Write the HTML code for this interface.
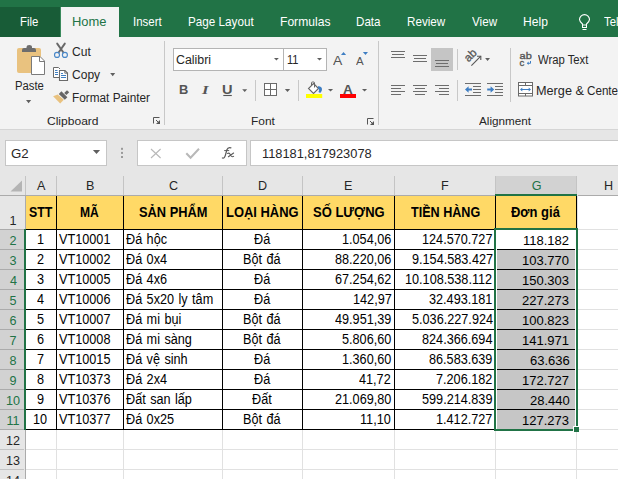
<!DOCTYPE html>
<html><head><meta charset="utf-8"><style>
html,body{margin:0;padding:0;}
body{width:618px;height:479px;overflow:hidden;position:relative;background:#e6e6e6;font-family:"Liberation Sans",sans-serif;}
div{position:absolute;}
.t{white-space:nowrap;line-height:1;transform-origin:0 0;}
</style></head><body>
<div style="left:0px;top:0px;width:618px;height:37px;background:#217346;"></div>
<div style="left:0px;top:7px;width:60px;height:30px;background:#185c37;"></div>
<div style="left:60px;top:7px;width:1px;height:30px;background:#3a8a5c;"></div>
<div style="left:61px;top:7px;width:58px;height:30px;background:#f3f3f3;"></div>
<div class="t" style="left:19.89px;top:16px;font-size:12.6px;color:#fff;transform:scaleX(0.9053);">File</div>
<div class="t" style="left:72.17px;top:16px;font-size:12.6px;color:#217346;transform:scaleX(1.0250);">Home</div>
<div class="t" style="left:132.89px;top:16px;font-size:12.6px;color:#fff;transform:scaleX(0.9097);">Insert</div>
<div class="t" style="left:188.07px;top:16px;font-size:12.6px;color:#fff;transform:scaleX(0.9286);">Page Layout</div>
<div class="t" style="left:280.04px;top:16px;font-size:12.6px;color:#fff;transform:scaleX(0.9608);">Formulas</div>
<div class="t" style="left:356.08px;top:16px;font-size:12.6px;color:#fff;transform:scaleX(0.9231);">Data</div>
<div class="t" style="left:407.07px;top:16px;font-size:12.6px;color:#fff;transform:scaleX(0.9250);">Review</div>
<div class="t" style="left:472.00px;top:16px;font-size:12.6px;color:#fff;transform:scaleX(0.9259);">View</div>
<div class="t" style="left:523.04px;top:16px;font-size:12.6px;color:#fff;transform:scaleX(0.9600);">Help</div>
<div class="t" style="left:604.00px;top:16px;font-size:12.6px;color:#fff;transform:scaleX(0.9000);">Tel</div>
<div style="left:0px;top:37px;width:618px;height:92px;background:#f3f3f3;"></div>
<div style="left:0px;top:129px;width:618px;height:1px;background:#d5d5d5;"></div>
<div style="left:164px;top:41px;width:1px;height:84px;background:#c8c8c8;"></div>
<div style="left:378px;top:41px;width:1px;height:84px;background:#c8c8c8;"></div>
<div style="left:255px;top:80px;width:1px;height:21px;background:#c8c8c8;"></div>
<div style="left:298px;top:80px;width:1px;height:21px;background:#c8c8c8;"></div>
<div style="left:457px;top:49px;width:1px;height:21px;background:#c8c8c8;"></div>
<div style="left:457px;top:80px;width:1px;height:21px;background:#c8c8c8;"></div>
<div style="left:510px;top:48px;width:1px;height:54px;background:#c8c8c8;"></div>
<div class="t" style="left:14.56px;top:80px;font-size:12.0px;color:#262626;transform:scaleX(0.9414);">Paste</div>
<div class="t" style="left:71.59px;top:46px;font-size:12.0px;color:#262626;transform:scaleX(1.0056);">Cut</div>
<div class="t" style="left:71.60px;top:69px;font-size:12.0px;color:#262626;transform:scaleX(1.0037);">Copy</div>
<div class="t" style="left:72.12px;top:92px;font-size:12.0px;color:#262626;transform:scaleX(0.9833);">Format Painter</div>
<div class="t" style="left:47.38px;top:116px;font-size:11.8px;color:#262626;transform:scaleX(1.0204);">Clipboard</div>
<div class="t" style="left:250.79px;top:116px;font-size:11.8px;color:#262626;transform:scaleX(1.0130);">Font</div>
<div class="t" style="left:479.10px;top:116px;font-size:11.8px;color:#262626;transform:scaleX(0.9925);">Alignment</div>
<div class="t" style="left:537.50px;top:54px;font-size:12.0px;color:#262626;transform:scaleX(0.9407);">Wrap Text</div>
<div class="t" style="left:536.44px;top:85px;font-size:12.0px;color:#262626;transform:scaleX(1.0568);">Merge &amp;</div>
<div class="t" style="left:586.73px;top:85px;font-size:12.0px;color:#262626;transform:scaleX(0.9700);">Center</div>
<div style="left:173px;top:48px;width:111px;height:23px;background:#fff;box-sizing:border-box;border:1px solid #b4b4b4;"></div>
<div style="left:283px;top:48px;width:44px;height:23px;background:#fff;box-sizing:border-box;border:1px solid #b4b4b4;"></div>
<div class="t" style="left:175.67px;top:54px;font-size:12.0px;color:#262626;transform:scaleX(1.0312);">Calibri</div>
<div class="t" style="left:286.98px;top:54px;font-size:12.0px;color:#262626;transform:scaleX(0.9182);">11</div>
<div class="t" style="left:178.53px;top:84px;font-size:12.0px;color:#555;font-weight:700;transform:scaleX(1.0714);">B</div>
<div class="t" style="left:222.09px;top:84px;font-size:12.0px;color:#555;font-weight:700;transform:scaleX(1.2143);">U</div>
<div class="t" style="left:202.00px;top:84px;font-size:12.5px;color:#555;font-weight:700;font-family:&quot;Liberation Serif&quot;;font-style:italic;transform:scaleX(1.3400);">I</div>
<div class="t" style="left:333.30px;top:54px;font-size:13.5px;color:#555;transform:scaleX(1.0333);">A</div>
<div class="t" style="left:356.10px;top:56px;font-size:11.0px;color:#555;transform:scaleX(1.0429);">A</div>
<div class="t" style="left:343.30px;top:84px;font-size:12.5px;color:#555;font-weight:700;transform:scaleX(1.0778);">A</div>
<div style="left:0px;top:130px;width:618px;height:46px;background:#e6e6e6;"></div>
<div style="left:5px;top:140px;width:102px;height:26px;background:#fff;box-sizing:border-box;border:1px solid #c6c6c6;"></div>
<div class="t" style="left:11.15px;top:148px;font-size:12.6px;color:#262626;transform:scaleX(1.0533);">G2</div>
<div style="left:137px;top:140px;width:110px;height:26px;background:#fff;box-sizing:border-box;border:1px solid #c6c6c6;"></div>
<div style="left:250px;top:140px;width:373px;height:26px;background:#fff;box-sizing:border-box;border:1px solid #c6c6c6;"></div>
<div class="t" style="left:261.78px;top:148px;font-size:12.6px;color:#262626;transform:scaleX(1.0189);">118181,817923078</div>
<div style="left:0px;top:176px;width:618px;height:19px;background:#e6e6e6;"></div>
<div style="left:0px;top:195px;width:25px;height:284px;background:#e6e6e6;"></div>
<div style="left:26px;top:196px;width:592px;height:283px;background:#fff;"></div>
<div style="left:26px;top:196px;width:550px;height:33px;background:#ffd966;"></div>
<div style="left:496px;top:176px;width:80px;height:18px;background:#d2d2d2;"></div>
<div style="left:25px;top:176px;width:1px;height:19px;background:#c4c4c4;"></div>
<div style="left:56px;top:176px;width:1px;height:19px;background:#c4c4c4;"></div>
<div style="left:123px;top:176px;width:1px;height:19px;background:#c4c4c4;"></div>
<div style="left:222px;top:176px;width:1px;height:19px;background:#c4c4c4;"></div>
<div style="left:302px;top:176px;width:1px;height:19px;background:#c4c4c4;"></div>
<div style="left:394px;top:176px;width:1px;height:19px;background:#c4c4c4;"></div>
<div style="left:495px;top:176px;width:1px;height:19px;background:#c4c4c4;"></div>
<div style="left:576px;top:176px;width:1px;height:19px;background:#c4c4c4;"></div>
<div style="left:0px;top:195px;width:618px;height:1px;background:#ababab;"></div>
<div style="left:25px;top:195px;width:1px;height:284px;background:#ababab;"></div>
<div style="left:0px;top:230px;width:24px;height:199px;background:#d2d2d2;"></div>
<div style="left:24px;top:229px;width:2px;height:201px;background:#217346;"></div>
<div style="left:0px;top:229px;width:24px;height:1px;background:#ababab;"></div>
<div style="left:0px;top:249px;width:24px;height:1px;background:#ababab;"></div>
<div style="left:0px;top:269px;width:24px;height:1px;background:#ababab;"></div>
<div style="left:0px;top:289px;width:24px;height:1px;background:#ababab;"></div>
<div style="left:0px;top:309px;width:24px;height:1px;background:#ababab;"></div>
<div style="left:0px;top:329px;width:24px;height:1px;background:#ababab;"></div>
<div style="left:0px;top:349px;width:24px;height:1px;background:#ababab;"></div>
<div style="left:0px;top:369px;width:24px;height:1px;background:#ababab;"></div>
<div style="left:0px;top:389px;width:24px;height:1px;background:#ababab;"></div>
<div style="left:0px;top:409px;width:24px;height:1px;background:#ababab;"></div>
<div style="left:0px;top:429px;width:24px;height:1px;background:#ababab;"></div>
<div style="left:0px;top:449px;width:24px;height:1px;background:#c4c4c4;"></div>
<div style="left:0px;top:469px;width:24px;height:1px;background:#c4c4c4;"></div>
<div style="left:0px;top:489px;width:24px;height:1px;background:#c4c4c4;"></div>
<div style="left:26px;top:429px;width:592px;height:1px;background:#e1e1e1;"></div>
<div style="left:26px;top:449px;width:592px;height:1px;background:#e1e1e1;"></div>
<div style="left:26px;top:469px;width:592px;height:1px;background:#e1e1e1;"></div>
<div style="left:26px;top:489px;width:592px;height:1px;background:#e1e1e1;"></div>
<div style="left:577px;top:229px;width:41px;height:1px;background:#e1e1e1;"></div>
<div style="left:577px;top:249px;width:41px;height:1px;background:#e1e1e1;"></div>
<div style="left:577px;top:269px;width:41px;height:1px;background:#e1e1e1;"></div>
<div style="left:577px;top:289px;width:41px;height:1px;background:#e1e1e1;"></div>
<div style="left:577px;top:309px;width:41px;height:1px;background:#e1e1e1;"></div>
<div style="left:577px;top:329px;width:41px;height:1px;background:#e1e1e1;"></div>
<div style="left:577px;top:349px;width:41px;height:1px;background:#e1e1e1;"></div>
<div style="left:577px;top:369px;width:41px;height:1px;background:#e1e1e1;"></div>
<div style="left:577px;top:389px;width:41px;height:1px;background:#e1e1e1;"></div>
<div style="left:577px;top:409px;width:41px;height:1px;background:#e1e1e1;"></div>
<div style="left:577px;top:429px;width:41px;height:1px;background:#e1e1e1;"></div>
<div style="left:577px;top:449px;width:41px;height:1px;background:#e1e1e1;"></div>
<div style="left:577px;top:469px;width:41px;height:1px;background:#e1e1e1;"></div>
<div style="left:577px;top:489px;width:41px;height:1px;background:#e1e1e1;"></div>
<div style="left:56px;top:430px;width:1px;height:49px;background:#e1e1e1;"></div>
<div style="left:123px;top:430px;width:1px;height:49px;background:#e1e1e1;"></div>
<div style="left:222px;top:430px;width:1px;height:49px;background:#e1e1e1;"></div>
<div style="left:302px;top:430px;width:1px;height:49px;background:#e1e1e1;"></div>
<div style="left:394px;top:430px;width:1px;height:49px;background:#e1e1e1;"></div>
<div style="left:495px;top:430px;width:1px;height:49px;background:#e1e1e1;"></div>
<div style="left:576px;top:430px;width:1px;height:49px;background:#e1e1e1;"></div>
<div style="left:577px;top:195px;width:1px;height:35px;background:#e1e1e1;"></div>
<div style="left:495px;top:194px;width:82px;height:2px;background:#217346;"></div>
<div style="left:497px;top:250px;width:78px;height:179px;background:#c6c6c6;"></div>
<div style="left:26px;top:229px;width:468px;height:1px;background:#000;"></div>
<div style="left:26px;top:249px;width:468px;height:1px;background:#000;"></div>
<div style="left:26px;top:269px;width:468px;height:1px;background:#000;"></div>
<div style="left:26px;top:289px;width:468px;height:1px;background:#000;"></div>
<div style="left:26px;top:309px;width:468px;height:1px;background:#000;"></div>
<div style="left:26px;top:329px;width:468px;height:1px;background:#000;"></div>
<div style="left:26px;top:349px;width:468px;height:1px;background:#000;"></div>
<div style="left:26px;top:369px;width:468px;height:1px;background:#000;"></div>
<div style="left:26px;top:389px;width:468px;height:1px;background:#000;"></div>
<div style="left:26px;top:409px;width:468px;height:1px;background:#000;"></div>
<div style="left:26px;top:429px;width:468px;height:1px;background:#000;"></div>
<div style="left:497px;top:249px;width:78px;height:1px;background:#000;"></div>
<div style="left:497px;top:269px;width:78px;height:1px;background:#000;"></div>
<div style="left:497px;top:289px;width:78px;height:1px;background:#000;"></div>
<div style="left:497px;top:309px;width:78px;height:1px;background:#000;"></div>
<div style="left:497px;top:329px;width:78px;height:1px;background:#000;"></div>
<div style="left:497px;top:349px;width:78px;height:1px;background:#000;"></div>
<div style="left:497px;top:369px;width:78px;height:1px;background:#000;"></div>
<div style="left:497px;top:389px;width:78px;height:1px;background:#000;"></div>
<div style="left:497px;top:409px;width:78px;height:1px;background:#000;"></div>
<div style="left:56px;top:196px;width:1px;height:234px;background:#000;"></div>
<div style="left:123px;top:196px;width:1px;height:234px;background:#000;"></div>
<div style="left:222px;top:196px;width:1px;height:234px;background:#000;"></div>
<div style="left:302px;top:196px;width:1px;height:234px;background:#000;"></div>
<div style="left:394px;top:196px;width:1px;height:234px;background:#000;"></div>
<div style="left:495px;top:196px;width:1px;height:234px;background:#000;"></div>
<div style="left:576px;top:196px;width:1px;height:234px;background:#000;"></div>
<div style="left:494px;top:228px;width:84px;height:2px;background:#217346;"></div>
<div style="left:494px;top:429px;width:84px;height:2px;background:#217346;"></div>
<div style="left:494px;top:228px;width:2px;height:203px;background:#217346;"></div>
<div style="left:576px;top:228px;width:2px;height:203px;background:#217346;"></div>
<div style="left:573px;top:426px;width:7px;height:7px;background:#fff;"></div>
<div style="left:574px;top:427px;width:5px;height:5px;background:#217346;"></div>
<div style="left:579px;top:429px;width:39px;height:1px;background:#e1e1e1;"></div>
<div style="left:576px;top:432px;width:1px;height:47px;background:#e1e1e1;"></div>
<div class="t" style="left:37.00px;top:180px;font-size:12.6px;color:#262626;">A</div>
<div class="t" style="left:86.00px;top:180px;font-size:12.6px;color:#262626;">B</div>
<div class="t" style="left:169.00px;top:180px;font-size:12.6px;color:#262626;">C</div>
<div class="t" style="left:257.90px;top:180px;font-size:12.6px;color:#262626;">D</div>
<div class="t" style="left:344.10px;top:180px;font-size:12.6px;color:#262626;">E</div>
<div class="t" style="left:440.90px;top:180px;font-size:12.6px;color:#262626;">F</div>
<div class="t" style="left:531.80px;top:180px;font-size:12.6px;color:#217346;">G</div>
<div class="t" style="left:604.10px;top:180px;font-size:12.6px;color:#262626;">H</div>
<div class="t" style="left:9.50px;top:215px;font-size:12.6px;color:#262626;">1</div>
<div class="t" style="left:9.50px;top:235px;font-size:12.6px;color:#217346;">2</div>
<div class="t" style="left:9.50px;top:255px;font-size:12.6px;color:#217346;">3</div>
<div class="t" style="left:10.00px;top:275px;font-size:12.6px;color:#217346;">4</div>
<div class="t" style="left:9.50px;top:295px;font-size:12.6px;color:#217346;">5</div>
<div class="t" style="left:9.50px;top:315px;font-size:12.6px;color:#217346;">6</div>
<div class="t" style="left:9.50px;top:335px;font-size:12.6px;color:#217346;">7</div>
<div class="t" style="left:9.50px;top:355px;font-size:12.6px;color:#217346;">8</div>
<div class="t" style="left:9.50px;top:375px;font-size:12.6px;color:#217346;">9</div>
<div class="t" style="left:6.00px;top:395px;font-size:12.6px;color:#217346;">10</div>
<div class="t" style="left:6.50px;top:415px;font-size:12.6px;color:#217346;">11</div>
<div class="t" style="left:6.00px;top:435px;font-size:12.6px;color:#262626;">12</div>
<div class="t" style="left:6.00px;top:455px;font-size:12.6px;color:#262626;">13</div>
<div class="t" style="left:6.00px;top:475px;font-size:12.6px;color:#262626;">14</div>
<div class="t" style="left:28.72px;top:205px;font-size:14px;color:#000;font-weight:700;transform:scaleX(0.8808);">STT</div>
<div class="t" style="left:80.14px;top:205px;font-size:14px;color:#000;font-weight:700;transform:scaleX(0.8619);">MÃ</div>
<div class="t" style="left:138.98px;top:205px;font-size:14px;color:#000;font-weight:700;transform:scaleX(0.9164);">SẢN PHẨM</div>
<div class="t" style="left:225.58px;top:205px;font-size:14px;color:#000;font-weight:700;transform:scaleX(0.9234);">LOẠI HÀNG</div>
<div class="t" style="left:312.77px;top:205px;font-size:14px;color:#000;font-weight:700;transform:scaleX(0.9280);">SỐ LƯỢNG</div>
<div class="t" style="left:411.20px;top:205px;font-size:14px;color:#000;font-weight:700;transform:scaleX(0.8987);">TIỀN HÀNG</div>
<div class="t" style="left:511.30px;top:205px;font-size:14px;color:#000;font-weight:700;transform:scaleX(0.9264);">Đơn giá</div>
<div class="t" style="left:36.88px;top:232px;font-size:14px;color:#000;transform:scaleX(0.9050);">1</div>
<div class="t" style="left:59.10px;top:232px;font-size:14px;color:#000;transform:scaleX(0.9050);">VT10001</div>
<div class="t" style="left:126.00px;top:232px;font-size:14px;color:#000;word-spacing:1px;transform:scaleX(0.9050);">Đá hộc</div>
<div class="t" style="left:253.85px;top:232px;font-size:14px;color:#000;word-spacing:1px;transform:scaleX(0.9050);">Đá</div>
<div class="t" style="left:342.13px;top:232px;font-size:14px;color:#000;transform:scaleX(0.9050);">1.054,06</div>
<div class="t" style="left:422.42px;top:232px;font-size:14px;color:#000;transform:scaleX(0.9050);">124.570.727</div>
<div class="t" style="left:523.00px;top:234px;font-size:13.0px;color:#000;">118.182</div>
<div class="t" style="left:36.88px;top:252px;font-size:14px;color:#000;transform:scaleX(0.9050);">2</div>
<div class="t" style="left:59.10px;top:252px;font-size:14px;color:#000;transform:scaleX(0.9050);">VT10002</div>
<div class="t" style="left:126.00px;top:252px;font-size:14px;color:#000;word-spacing:1px;transform:scaleX(0.9050);">Đá 0x4</div>
<div class="t" style="left:242.54px;top:252px;font-size:14px;color:#000;word-spacing:1px;transform:scaleX(0.9050);">Bột đá</div>
<div class="t" style="left:334.89px;top:252px;font-size:14px;color:#000;transform:scaleX(0.9050);">88.220,06</div>
<div class="t" style="left:411.56px;top:252px;font-size:14px;color:#000;transform:scaleX(0.9050);">9.154.583.427</div>
<div class="t" style="left:522.00px;top:254px;font-size:13.0px;color:#000;">103.770</div>
<div class="t" style="left:36.88px;top:272px;font-size:14px;color:#000;transform:scaleX(0.9050);">3</div>
<div class="t" style="left:59.10px;top:272px;font-size:14px;color:#000;transform:scaleX(0.9050);">VT10005</div>
<div class="t" style="left:126.00px;top:272px;font-size:14px;color:#000;word-spacing:1px;transform:scaleX(0.9050);">Đá 4x6</div>
<div class="t" style="left:253.85px;top:272px;font-size:14px;color:#000;word-spacing:1px;transform:scaleX(0.9050);">Đá</div>
<div class="t" style="left:334.89px;top:272px;font-size:14px;color:#000;transform:scaleX(0.9050);">67.254,62</div>
<div class="t" style="left:405.22px;top:272px;font-size:14px;color:#000;transform:scaleX(0.9050);">10.108.538.112</div>
<div class="t" style="left:522.00px;top:274px;font-size:13.0px;color:#000;">150.303</div>
<div class="t" style="left:36.88px;top:292px;font-size:14px;color:#000;transform:scaleX(0.9050);">4</div>
<div class="t" style="left:59.10px;top:292px;font-size:14px;color:#000;transform:scaleX(0.9050);">VT10006</div>
<div class="t" style="left:126.00px;top:292px;font-size:14px;color:#000;word-spacing:1px;transform:scaleX(0.9050);">Đá 5x20 ly tâm</div>
<div class="t" style="left:253.85px;top:292px;font-size:14px;color:#000;word-spacing:1px;transform:scaleX(0.9050);">Đá</div>
<div class="t" style="left:352.99px;top:292px;font-size:14px;color:#000;transform:scaleX(0.9050);">142,97</div>
<div class="t" style="left:428.75px;top:292px;font-size:14px;color:#000;transform:scaleX(0.9050);">32.493.181</div>
<div class="t" style="left:522.00px;top:294px;font-size:13.0px;color:#000;">227.273</div>
<div class="t" style="left:36.88px;top:312px;font-size:14px;color:#000;transform:scaleX(0.9050);">5</div>
<div class="t" style="left:59.10px;top:312px;font-size:14px;color:#000;transform:scaleX(0.9050);">VT10007</div>
<div class="t" style="left:126.00px;top:312px;font-size:14px;color:#000;word-spacing:1px;transform:scaleX(0.9050);">Đá mi bụi</div>
<div class="t" style="left:242.54px;top:312px;font-size:14px;color:#000;word-spacing:1px;transform:scaleX(0.9050);">Bột đá</div>
<div class="t" style="left:334.89px;top:312px;font-size:14px;color:#000;transform:scaleX(0.9050);">49.951,39</div>
<div class="t" style="left:411.56px;top:312px;font-size:14px;color:#000;transform:scaleX(0.9050);">5.036.227.924</div>
<div class="t" style="left:522.00px;top:314px;font-size:13.0px;color:#000;">100.823</div>
<div class="t" style="left:36.88px;top:332px;font-size:14px;color:#000;transform:scaleX(0.9050);">6</div>
<div class="t" style="left:59.10px;top:332px;font-size:14px;color:#000;transform:scaleX(0.9050);">VT10008</div>
<div class="t" style="left:126.00px;top:332px;font-size:14px;color:#000;word-spacing:1px;transform:scaleX(0.9050);">Đá mi sàng</div>
<div class="t" style="left:242.54px;top:332px;font-size:14px;color:#000;word-spacing:1px;transform:scaleX(0.9050);">Bột đá</div>
<div class="t" style="left:342.13px;top:332px;font-size:14px;color:#000;transform:scaleX(0.9050);">5.806,60</div>
<div class="t" style="left:421.51px;top:332px;font-size:14px;color:#000;transform:scaleX(0.9050);">824.366.694</div>
<div class="t" style="left:522.00px;top:334px;font-size:13.0px;color:#000;">141.971</div>
<div class="t" style="left:36.88px;top:352px;font-size:14px;color:#000;transform:scaleX(0.9050);">7</div>
<div class="t" style="left:59.10px;top:352px;font-size:14px;color:#000;transform:scaleX(0.9050);">VT10015</div>
<div class="t" style="left:126.00px;top:352px;font-size:14px;color:#000;word-spacing:1px;transform:scaleX(0.9050);">Đá vệ sinh</div>
<div class="t" style="left:253.85px;top:352px;font-size:14px;color:#000;word-spacing:1px;transform:scaleX(0.9050);">Đá</div>
<div class="t" style="left:342.13px;top:352px;font-size:14px;color:#000;transform:scaleX(0.9050);">1.360,60</div>
<div class="t" style="left:428.75px;top:352px;font-size:14px;color:#000;transform:scaleX(0.9050);">86.583.639</div>
<div class="t" style="left:530.00px;top:354px;font-size:13.0px;color:#000;">63.636</div>
<div class="t" style="left:36.88px;top:372px;font-size:14px;color:#000;transform:scaleX(0.9050);">8</div>
<div class="t" style="left:59.10px;top:372px;font-size:14px;color:#000;transform:scaleX(0.9050);">VT10373</div>
<div class="t" style="left:126.00px;top:372px;font-size:14px;color:#000;word-spacing:1px;transform:scaleX(0.9050);">Đá 2x4</div>
<div class="t" style="left:253.85px;top:372px;font-size:14px;color:#000;word-spacing:1px;transform:scaleX(0.9050);">Đá</div>
<div class="t" style="left:359.32px;top:372px;font-size:14px;color:#000;transform:scaleX(0.9050);">41,72</div>
<div class="t" style="left:435.99px;top:372px;font-size:14px;color:#000;transform:scaleX(0.9050);">7.206.182</div>
<div class="t" style="left:522.00px;top:374px;font-size:13.0px;color:#000;">172.727</div>
<div class="t" style="left:36.88px;top:392px;font-size:14px;color:#000;transform:scaleX(0.9050);">9</div>
<div class="t" style="left:59.10px;top:392px;font-size:14px;color:#000;transform:scaleX(0.9050);">VT10376</div>
<div class="t" style="left:126.00px;top:392px;font-size:14px;color:#000;word-spacing:1px;transform:scaleX(0.9050);">Đất san lấp</div>
<div class="t" style="left:252.04px;top:392px;font-size:14px;color:#000;word-spacing:1px;transform:scaleX(0.9050);">Đất</div>
<div class="t" style="left:334.89px;top:392px;font-size:14px;color:#000;transform:scaleX(0.9050);">21.069,80</div>
<div class="t" style="left:422.42px;top:392px;font-size:14px;color:#000;transform:scaleX(0.9050);">599.214.839</div>
<div class="t" style="left:530.00px;top:394px;font-size:13.0px;color:#000;">28.440</div>
<div class="t" style="left:33.26px;top:412px;font-size:14px;color:#000;transform:scaleX(0.9050);">10</div>
<div class="t" style="left:59.10px;top:412px;font-size:14px;color:#000;transform:scaleX(0.9050);">VT10377</div>
<div class="t" style="left:126.00px;top:412px;font-size:14px;color:#000;word-spacing:1px;transform:scaleX(0.9050);">Đá 0x25</div>
<div class="t" style="left:242.54px;top:412px;font-size:14px;color:#000;word-spacing:1px;transform:scaleX(0.9050);">Bột đá</div>
<div class="t" style="left:360.23px;top:412px;font-size:14px;color:#000;transform:scaleX(0.9050);">11,10</div>
<div class="t" style="left:435.99px;top:412px;font-size:14px;color:#000;transform:scaleX(0.9050);">1.412.727</div>
<div class="t" style="left:522.00px;top:414px;font-size:13.0px;color:#000;">127.273</div>
<svg style="position:absolute;left:0;top:0" width="618" height="479" viewBox="0 0 618 479"><rect x="17" y="48" width="24" height="25" rx="2" fill="#e9c27f"/><path d="M22,52 V50 Q22,48 24,48 H26.5 V47 Q26.5,45 29.2,45 Q32,45 32,47 V48 H34 Q36,48 36,50 V52 Z" fill="#6d6d6d"/><path d="M31.5,56.5 H40 L44.5,61 V74.5 H31.5 Z" fill="#fff" stroke="#7a7a7a" stroke-width="1"/><path d="M39.5,56.5 V61.5 H44.5" fill="none" stroke="#7a7a7a" stroke-width="1"/><path d="M26,100 H31.2 L28.6,103.3 Z" fill="#5f5f5f"/><path d="M57.2,43.6 L63.2,52.3 M64.8,43.6 L58.8,52.3" stroke="#686868" stroke-width="1.9" stroke-linecap="round"/><circle cx="57" cy="54.9" r="2.5" fill="none" stroke="#4a88c8" stroke-width="1.15"/><circle cx="64.9" cy="54.9" r="2.5" fill="none" stroke="#4a88c8" stroke-width="1.15"/><path d="M59.5,77.5 H53.5 V67.5 H58.5 L60,69" fill="#fff" stroke="#6a6a6a" stroke-width="1"/><rect x="54" y="68" width="5" height="9" fill="#fff"/><path d="M55,70.5 H57.5 M55,72.5 H58 M55,74.5 H58" stroke="#3f7fc1" stroke-width="1"/><path d="M59.5,70.5 H65 L67.5,73 V80.5 H59.5 Z" fill="#fff" stroke="#6a6a6a" stroke-width="1.1"/><path d="M64.8,70.8 V73.2 H67.3" fill="none" stroke="#6a6a6a" stroke-width="0.9"/><path d="M61,73.5 H63 M61,75.5 H66 M61,77.5 H66" stroke="#3f7fc1" stroke-width="1"/><path d="M110.2,73 H115.2 L112.7,76.2 Z" fill="#5f5f5f"/><path d="M53.1,96.2 L57.7,94.6 L63.8,99.8 L60.2,103.5 Z" fill="#e9c27f"/><path d="M58.8,93.9 L61.4,91.3 L67.4,97.2 L64.8,99.8 Z" fill="#666"/><path d="M64.2,93 L67,90.2 L69.2,92.3 L66.4,95.1 Z" fill="#666"/><path d="M153.5,123.5 V117.5 H159.5" fill="none" stroke="#555" stroke-width="1"/><path d="M156,120 L159.5,123.5" stroke="#555" stroke-width="1"/><path d="M160,120 V124 H156 Z" fill="#555"/><path d="M367.5,124.5 V118.5 H373.5" fill="none" stroke="#555" stroke-width="1"/><path d="M370,121 L373.5,124.5" stroke="#555" stroke-width="1"/><path d="M374,121 V125 H370 Z" fill="#555"/><path d="M274,58 H278.8 L276.4,60.6 Z" fill="#5f5f5f"/><path d="M317,58 H322 L319.5,60.6 Z" fill="#5f5f5f"/><path d="M341,55.1 L343.5,52.1 L346.1,55.1 Z" fill="#3e7ec3"/><path d="M362.9,52.1 H368 L365.45,55.1 Z" fill="#3e7ec3"/><path d="M223.3,95.5 H231.8" stroke="#555" stroke-width="1.1"/><path d="M242.2,89.3 H247.2 L244.7,92.1 Z" fill="#5f5f5f"/><rect x="264.5" y="83.5" width="12" height="12" fill="#fff" stroke="#6a6a6a" stroke-width="1"/><path d="M270.5,83.5 V95.5 M264.5,89.5 H276.5" stroke="#6a6a6a" stroke-width="1"/><path d="M284.9,89 H290.1 L287.5,91.9 Z" fill="#5f5f5f"/><path d="M313.5,83.5 L318.5,88.5 L313.5,93.5 L308.5,88.5 Z" fill="#fff" stroke="#666" stroke-width="1.1"/><path d="M311.5,86 V82.8 Q311.5,82 312.5,82 H313.6 Q314.5,82 314.5,83 V87.5" fill="none" stroke="#666" stroke-width="1"/><path d="M318,86.3 Q321.5,86 322,89 Q322.2,91.5 320.2,93 L318.5,92 Q320,90 318,87.8 Z" fill="#3e7ec3"/><rect x="306" y="94" width="16.2" height="4" fill="#ffff00"/><path d="M328,89 H333.1 L330.55,91.5 Z" fill="#5f5f5f"/><rect x="340" y="94" width="16" height="4" fill="#ff0000"/><path d="M362,89 H367.1 L364.55,91.5 Z" fill="#5f5f5f"/><rect x="391" y="51" width="14" height="1" fill="#6d6d6d"/><rect x="391" y="57" width="14" height="1" fill="#6d6d6d"/><rect x="392" y="54" width="12" height="1" fill="#6d6d6d"/><rect x="413" y="55" width="14" height="1" fill="#6d6d6d"/><rect x="413" y="61" width="14" height="1" fill="#6d6d6d"/><rect x="414" y="58" width="12" height="1" fill="#6d6d6d"/><rect x="431" y="48" width="22" height="23" fill="#c5c5c5"/><rect x="435" y="60" width="14" height="1" fill="#6d6d6d"/><rect x="435" y="66" width="14" height="1" fill="#6d6d6d"/><rect x="436" y="63" width="12" height="1" fill="#6d6d6d"/><rect x="391" y="85" width="14" height="1" fill="#6d6d6d"/><rect x="391" y="91" width="14" height="1" fill="#6d6d6d"/><rect x="391" y="88" width="10" height="1" fill="#6d6d6d"/><rect x="391" y="94" width="10" height="1" fill="#6d6d6d"/><rect x="413" y="85" width="14" height="1" fill="#6d6d6d"/><rect x="413" y="91" width="14" height="1" fill="#6d6d6d"/><rect x="415" y="88" width="10" height="1" fill="#6d6d6d"/><rect x="415" y="94" width="10" height="1" fill="#6d6d6d"/><rect x="435" y="85" width="14" height="1" fill="#6d6d6d"/><rect x="435" y="91" width="14" height="1" fill="#6d6d6d"/><rect x="439" y="88" width="10" height="1" fill="#6d6d6d"/><rect x="439" y="94" width="10" height="1" fill="#6d6d6d"/><text x="0" y="0" font-family="Liberation Sans" font-size="11.5" fill="#555" stroke="#555" stroke-width="0.3" transform="translate(468.6,62.4) rotate(-45)">ab</text><path d="M471.4,65.6 L480.8,56.2" stroke="#555" stroke-width="1.1"/><path d="M477,56.2 H480.8 V60" fill="none" stroke="#555" stroke-width="1.1"/><path d="M485.1,58 H490 L487.55,61 Z" fill="#5f5f5f"/><rect x="465" y="83" width="16" height="1" fill="#6d6d6d"/><rect x="465" y="95" width="16" height="1" fill="#6d6d6d"/><rect x="473" y="86" width="8" height="1" fill="#6d6d6d"/><rect x="473" y="89" width="8" height="1" fill="#6d6d6d"/><rect x="473" y="92" width="8" height="1" fill="#6d6d6d"/><path d="M465,89.5 L468.6,86.2 V88.5 H472 V90.5 H468.6 V92.8 Z" fill="#3e7ec3"/><rect x="487" y="83" width="16" height="1" fill="#6d6d6d"/><rect x="487" y="95" width="16" height="1" fill="#6d6d6d"/><rect x="495" y="86" width="8" height="1" fill="#6d6d6d"/><rect x="495" y="89" width="8" height="1" fill="#6d6d6d"/><rect x="495" y="92" width="8" height="1" fill="#6d6d6d"/><path d="M494.2,89.5 L490.6,86.2 V88.5 H487.2 V90.5 H490.6 V92.8 Z" fill="#3e7ec3"/><text x="519.6" y="58.8" font-family="Liberation Sans" font-size="9.6" fill="#555" stroke="#555" stroke-width="0.35" textLength="12.2" lengthAdjust="spacingAndGlyphs">ab</text><text x="519.6" y="65.6" font-family="Liberation Sans" font-size="9.6" fill="#555" stroke="#555" stroke-width="0.35">c</text><path d="M530.5,61 V63.3 H527.8" fill="none" stroke="#3e7ec3" stroke-width="1"/><path d="M526.8,63.3 L528.6,61.6 V65 Z" fill="#3e7ec3"/><rect x="518.5" y="82.5" width="14" height="13.5" fill="#fff" stroke="#6a6a6a" stroke-width="1"/><path d="M518.5,85.5 H532.5 M518.5,93.5 H532.5 M525.5,82.5 V85.5 M525.5,93.5 V96" stroke="#6a6a6a" stroke-width="1"/><path d="M521,89.5 H530" stroke="#3e7ec3" stroke-width="1"/><path d="M520,89.5 L522.3,87.5 V91.5 Z M531,89.5 L528.7,87.5 V91.5 Z" fill="#3e7ec3"/><path d="M582.5,25.5 V24 Q579.5,21.5 579.5,19.6 A5,5 0 1 1 589.5,19.6 Q589.5,21.5 586.5,24 V25.5" fill="none" stroke="#fff" stroke-width="1.1"/><rect x="582.5" y="25" width="4" height="2.5" fill="none" stroke="#fff" stroke-width="1"/><rect x="582.5" y="29" width="4" height="1" fill="#fff"/><path d="M92.9,150 H100.1 L96.5,154 Z" fill="#5f5f5f"/><rect x="121" y="147.8" width="2" height="2" fill="#9a9a9a"/><rect x="121" y="151.9" width="2" height="2" fill="#9a9a9a"/><rect x="121" y="156" width="2" height="2" fill="#9a9a9a"/><path d="M151,149 L160.6,158 M160.6,149 L151,158" stroke="#b8b8b8" stroke-width="1.1"/><path d="M186.3,153.2 L190.6,157.8 L199,148.8" fill="none" stroke="#b8b8b8" stroke-width="2"/><path d="M222.4,158 Q224.6,158.6 225.4,155.2 L226.9,149.8 Q227.9,146.9 230.9,147.8" fill="none" stroke="#5a5a5a" stroke-width="1.25" stroke-linecap="round"/><path d="M224.2,150.6 H229.2" stroke="#5a5a5a" stroke-width="1"/><path d="M227.6,153.4 Q229,152.6 230.1,154.2 L231.4,156.2 Q232.4,157.2 233.6,156.4 M233.6,153 L228.4,156.7" fill="none" stroke="#5a5a5a" stroke-width="1.1" stroke-linecap="round"/><path d="M10.5,191.5 L22,180.5 V191.5 Z" fill="#b4b4b4"/></svg>
</body></html>
